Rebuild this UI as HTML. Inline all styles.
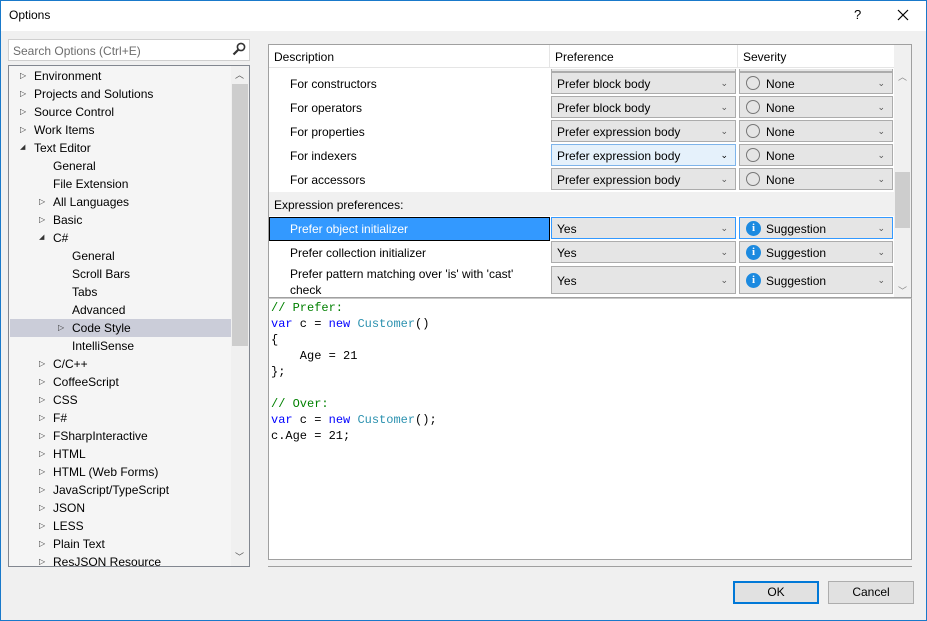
<!DOCTYPE html>
<html><head><meta charset="utf-8"><style>
*{margin:0;padding:0;box-sizing:border-box}
body{width:927px;height:621px;overflow:hidden;background:#f0f0f0;font-family:"Segoe UI","Liberation Sans",sans-serif;font-size:12px;color:#000;position:relative}
.a{position:absolute;white-space:nowrap}
#win{position:absolute;left:0;top:0;width:927px;height:621px;border:1px solid #1979ca;pointer-events:none}
.tree{position:absolute;left:8px;top:65px;width:242px;height:502px;border:1px solid #828790;background:#f5f5f5;overflow:hidden}
.ti{position:absolute;height:18px;line-height:18px;font-size:12px;white-space:nowrap}
.arr{position:absolute;font-size:8px;color:#333}
.cb{position:absolute;height:22px;background:#e5e5e5;border:1px solid #acacac;line-height:20px;padding-left:5px}
.cb .dd{position:absolute;right:7px;top:0;font-size:9px;color:#555}
.sev{padding-left:26px}
.circ{position:absolute;left:6px;top:3px;width:14px;height:14px;border:1.5px solid #777;border-radius:50%}
.info{position:absolute;left:6px;top:3px;width:15px;height:15px;border-radius:50%;background:#1c8ae0;color:#fff;font-weight:bold;font-size:11px;line-height:15px;text-align:center;font-family:"Liberation Serif",serif}
.desc{position:absolute;left:290px;font-size:12px}
pre{font-family:"Liberation Mono",monospace;font-size:12px;line-height:16px;white-space:pre !important}
.btn{position:absolute;height:23px;background:#e1e1e1;border:1px solid #adadad;text-align:center;line-height:21px}
</style></head><body>
<div class="a" style="left:0;top:0;width:927px;height:31px;background:#fff"></div>
<div class="a" style="left:9px;top:8px;font-size:12px">Options</div>
<div class="a" style="left:854px;top:7px;font-size:13px">?</div>
<svg class="a" style="left:897px;top:9px" width="12" height="12"><path d="M1 1L11 11M11 1L1 11" stroke="#000" stroke-width="1.2"/></svg>

<div class="a" style="left:8px;top:39px;width:242px;height:22px;background:#fff;border:1px solid #cfcfcf"></div>
<div class="a" style="left:13px;top:44px;color:#6d6d6d">Search Options (Ctrl+E)</div>
<svg class="a" style="left:232px;top:42px" width="14" height="14"><circle cx="9" cy="5" r="3.6" fill="none" stroke="#333" stroke-width="1.6"/><line x1="6.5" y1="7.5" x2="1.5" y2="12.5" stroke="#333" stroke-width="2.2"/></svg>

<div class="tree">
<div class="a" style="left:222px;top:0;width:18px;height:500px;background:#f0f0f0"></div>
<div class="a" style="left:223px;top:18px;width:16px;height:262px;background:#cdcdcd"></div>
<div class="a" style="left:226px;top:2px;font-size:9px;color:#555">︿</div>
<div class="a" style="left:226px;top:484px;font-size:9px;color:#555">﹀</div>
<div class="a" style="left:1px;top:253px;width:221px;height:18px;background:#cbcdd9"></div>
<div id="tr"></div>
</div>
<script>
var items=[[0,1,"Environment"],[0,1,"Projects and Solutions"],[0,1,"Source Control"],[0,1,"Work Items"],[0,2,"Text Editor"],[1,0,"General"],[1,0,"File Extension"],[1,1,"All Languages"],[1,1,"Basic"],[1,2,"C#"],[2,0,"General"],[2,0,"Scroll Bars"],[2,0,"Tabs"],[2,0,"Advanced"],[2,1,"Code Style"],[2,0,"IntelliSense"],[1,1,"C/C++"],[1,1,"CoffeeScript"],[1,1,"CSS"],[1,1,"F#"],[1,1,"FSharpInteractive"],[1,1,"HTML"],[1,1,"HTML (Web Forms)"],[1,1,"JavaScript/TypeScript"],[1,1,"JSON"],[1,1,"LESS"],[1,1,"Plain Text"],[1,1,"ResJSON Resource"]];
var h="";items.forEach(function(it,i){var y=1+i*18;var tx=25+it[0]*19;
h+='<div class="ti" style="left:'+tx+'px;top:'+y+'px;">'+it[2]+'</div>';
if(it[1]==1)h+='<div class="arr" style="left:'+(tx-14)+'px;top:'+(y+4)+'px;">▷</div>';
if(it[1]==2)h+='<div class="arr" style="left:'+(tx-14)+'px;top:'+(y+4)+'px;font-size:7px">◢</div>';});
document.getElementById("tr").innerHTML=h;
</script>

<!-- grid -->
<div class="a" style="left:268px;top:44px;width:644px;height:254px;border:1px solid #a0a0a0;background:#fff"></div>
<div class="a" style="left:269px;top:45px;width:625px;height:23px;background:#fff;border-bottom:1px solid #e5e5e5"></div>
<div class="a" style="left:549px;top:45px;width:1px;height:23px;background:#e5e5e5"></div>
<div class="a" style="left:737px;top:45px;width:1px;height:23px;background:#e5e5e5"></div>
<div class="a" style="left:274px;top:50px">Description</div>
<div class="a" style="left:555px;top:50px">Preference</div>
<div class="a" style="left:743px;top:50px">Severity</div>
<div class="a" style="left:894px;top:45px;width:17px;height:252px;background:#f0f0f0"></div>
<div class="a" style="left:895px;top:172px;width:15px;height:56px;background:#cdcdcd"></div>
<div class="a" style="left:898px;top:70px;font-size:9px;color:#888">︿</div>
<div class="a" style="left:898px;top:284px;font-size:9px;color:#888">﹀</div>
<div class="a" style="left:551px;top:69px;width:185px;height:3px;background:#e5e5e5;border:1px solid #acacac;border-top:0"></div>
<div class="a" style="left:739px;top:69px;width:154px;height:3px;background:#e5e5e5;border:1px solid #acacac;border-top:0"></div>
<div class="a" style="left:269px;top:192px;width:625px;height:24px;background:#f0f0f0"></div>
<div class="a" style="left:274px;top:198px">Expression preferences:</div>
<div class="a" style="left:269px;top:217px;width:281px;height:24px;background:#3399ff;border:1px solid #000"></div>
<div id="gr"></div>
<script>
var rows=[["For constructors","Prefer block body",83,0],["For operators","Prefer block body",107,0],["For properties","Prefer expression body",131,0],["For indexers","Prefer expression body",155,0],["For accessors","Prefer expression body",179,0],["Prefer object initializer","Yes",228,1],["Prefer collection initializer","Yes",252,1],["Prefer pattern matching over 'is' with 'cast'<br>check","Yes",280,1]];
var g="";rows.forEach(function(r,i){var c=r[2];var hi=(i==3);var sel=(i==5);
var desctop=(i==7)?c-14:c-7;
g+='<div class="desc" style="top:'+desctop+'px;line-height:16px;white-space:nowrap;'+(sel?'color:#fff':'')+'">'+r[0]+'</div>';
var hh=(i==7)?28:22,t=(i==7)?c-14:c-11;
g+='<div class="cb" style="left:551px;top:'+t+'px;width:185px;height:'+hh+'px;line-height:'+hh+'px;'+(hi?'background:#e5f1fb;border-color:#7eb4ea;':'')+(sel?'border-color:#3399ff;':'')+'">'+r[1]+'<span class="dd" style="line-height:'+(hh-2)+'px;'+(hi?'color:#000':'')+'">⌄</span></div>';
g+='<div class="cb sev" style="left:739px;top:'+t+'px;width:154px;height:'+hh+'px;line-height:'+hh+'px;'+(sel?'border-color:#3399ff;':'')+'">'+(r[3]?'<span class="info" style="top:'+((hh-17)/2)+'px">i</span>Suggestion':'<span class="circ"></span>None')+'<span class="dd" style="line-height:'+(hh-2)+'px">⌄</span></div>';});
document.getElementById("gr").innerHTML=g;
</script>

<!-- code -->
<div class="a" style="left:268px;top:298px;width:644px;height:262px;border:1px solid #a0a0a0;border-top:1px solid #c8c8c8;background:#fff"></div>
<pre class="a" style="left:271px;top:300px"><span style="color:#008000">// Prefer:</span>
<span style="color:#0000ff">var</span> c = <span style="color:#0000ff">new</span> <span style="color:#2b91af">Customer</span>()
{
    Age = 21
};

<span style="color:#008000">// Over:</span>
<span style="color:#0000ff">var</span> c = <span style="color:#0000ff">new</span> <span style="color:#2b91af">Customer</span>();
c.Age = 21;</pre>

<div class="a" style="left:268px;top:566px;width:644px;height:1px;background:#a0a0a0"></div>
<div class="btn" style="left:733px;top:581px;width:86px;border:2px solid #0078d7;line-height:19px">OK</div>
<div class="btn" style="left:828px;top:581px;width:86px">Cancel</div>
<div id="win"></div>
</body></html>
